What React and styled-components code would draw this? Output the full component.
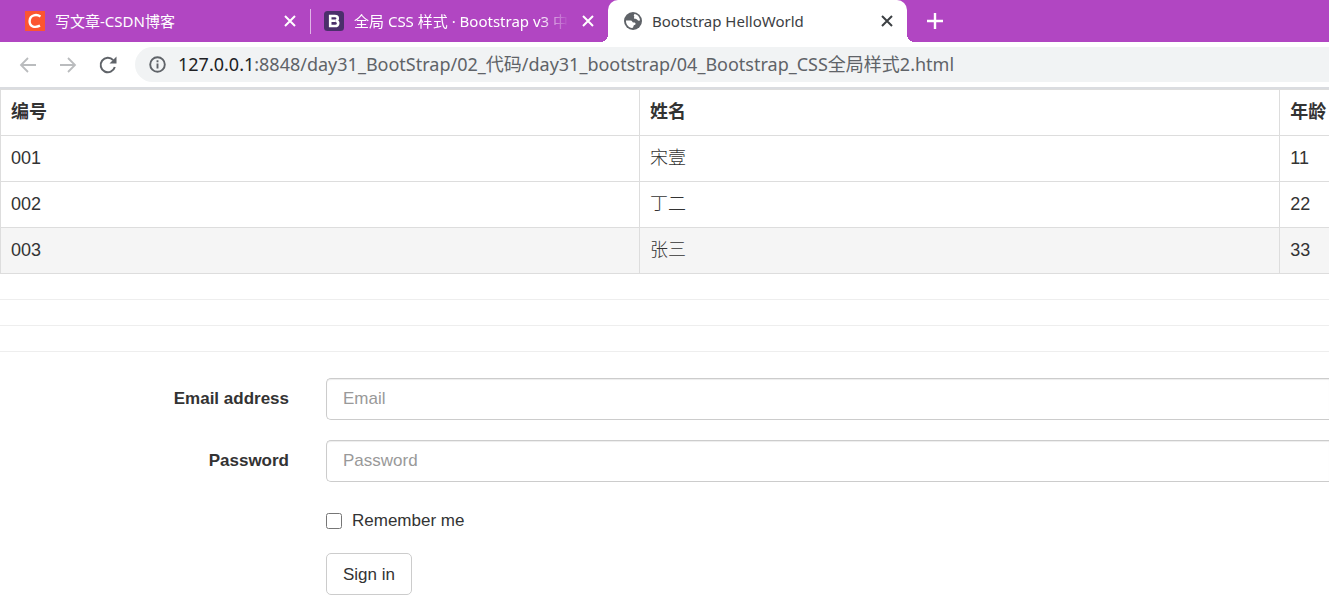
import React from 'react'
import styled, { createGlobalStyle } from 'styled-components'

const GlobalStyle = createGlobalStyle`
  * {
    box-sizing: border-box;
  }
  body {
    margin: 0;
    overflow: hidden;
    background: #fff;
    color: #333;
    font-family: "Liberation Sans", Arial, "Noto Sans CJK SC", sans-serif;
  }
`

const TabStrip = styled.div`
  display: flex;
  height: 42px;
  background: #b146c2;
  font-family: "Noto Sans", "Noto Sans CJK SC", sans-serif;
  font-size: 15px;
`

const Tab = styled.div`
  position: relative;
  display: flex;
  align-items: center;
  gap: 10px;
  flex: 0 1 ${props => props.$width}px;
  min-width: 0;
  padding: 0 11px 0 ${props => props.$start}px;
  color: ${props => (props.$active ? '#3c4043' : '#fff')};
  background: ${props => (props.$active ? '#fff' : 'transparent')};
  border-radius: 10px 10px 0 0;
  & > svg {
    flex: none;
  }
  ${props => props.$active && `
    &::before,
    &::after {
      content: '';
      position: absolute;
      bottom: 0;
      width: 8px;
      height: 8px;
    }
    &::before {
      right: 100%;
      background: radial-gradient(circle at 0 0, transparent 8px, #fff 8px);
    }
    &::after {
      left: 100%;
      background: radial-gradient(circle at 100% 0, transparent 8px, #fff 8px);
    }
  `}
`

const TabTitle = styled.span`
  flex: 1;
  line-height: 24px;
  white-space: nowrap;
  ${props => props.$faded && `
    mask-image: linear-gradient(to right, #000 calc(100% - 30px), transparent);
  `}
`

const Divider = styled.span`
  align-self: center;
  width: 1px;
  height: 25px;
  background: #e0b5e7;
`

const IconButton = styled.button`
  display: flex;
  align-items: center;
  justify-content: center;
  flex: none;
  width: ${props => props.$size}px;
  height: ${props => props.$size}px;
  padding: 0;
  border: 0;
  background: none;
  color: ${props => props.$color || 'inherit'};
`

const NewTab = styled(IconButton)`
  align-self: center;
  margin-left: 18px;
`

const Toolbar = styled.div`
  display: flex;
  align-items: center;
  gap: 20px;
  height: 45px;
  padding-left: 18px;
`

const AddressBar = styled.div`
  display: flex;
  align-items: center;
  gap: 12px;
  flex: 1;
  height: 35px;
  margin-left: -3px;
  padding-left: 14px;
  border-radius: 18px 0 0 18px;
  background: #f1f3f4;
  color: #5f6368;
`

const Url = styled.span`
  padding-bottom: 2px;
  font-family: "Noto Sans", "Noto Sans CJK SC", sans-serif;
  font-size: 18px;
  line-height: 26px;
  white-space: nowrap;
`

const Host = styled.span`
  color: #202124;
`

const Page = styled.main`
  border-top: 2px solid #dadce0;
`

const Table = styled.table`
  width: 100%;
  table-layout: fixed;
  border-collapse: collapse;
  font-size: 18px;
  line-height: 25px;
`

const Cell = styled.td`
  height: 46px;
  padding: 10px;
  border: 1px solid #ddd;
  font-weight: 300;
  text-align: left;
  white-space: nowrap;
  &:last-child {
    padding-right: 0;
    border-right: 0;
  }
`

const HeadCell = styled(Cell)`
  font-weight: 700;
`

const Row = styled.tr`
  background: ${props => (props.$active ? '#f5f5f5' : '#fff')};
`

const Column = styled.col`
  width: ${props => props.$width};
`

const Rule = styled.hr`
  margin: 25px 0;
  border: 0;
  border-top: 1px solid #eee;
`

const Form = styled.form`
  display: grid;
  grid-template-columns: 289px 1fr;
  column-gap: 37px;
  row-gap: 20px;
  margin-top: 26px;
  font-size: 17px;
  line-height: 25px;
`

const Label = styled.label`
  padding-top: 8px;
  font-weight: 700;
  text-align: right;
`

const Input = styled.input`
  width: 100%;
  height: 42px;
  padding: 7px 16px;
  border: 1px solid #ccc;
  border-right: 0;
  border-radius: 5px 0 0 5px;
  box-shadow: inset 0 1px 1px rgba(0, 0, 0, 0.075);
  color: #555;
  font: inherit;
  &::placeholder {
    color: #999;
  }
`

const Offset = styled.div`
  grid-column: 2;
`

const CheckLabel = styled.label`
  display: flex;
  align-items: center;
  gap: 10px;
  padding-top: 6px;
`

const Checkbox = styled.input`
  width: 16px;
  height: 16px;
  margin: 0;
`

const Submit = styled.button`
  height: 42px;
  padding: 0 16px;
  border: 1px solid #ccc;
  border-radius: 5px;
  background: #fff;
  color: #333;
  font: inherit;
`

const CloseIcon = () => (
  <svg width="12" height="12" viewBox="0 0 12 12" fill="none" stroke="currentColor" strokeWidth="2">
    <path d="M1 1l10 10M11 1L1 11" />
  </svg>
)

const CsdnIcon = () => (
  <svg width="20" height="20" viewBox="0 0 20 20">
    <path fill="#fc5531" d="M0 0h20v20H0z" />
    <path d="M15.5 5.4C12 3.2 5 3.2 4.6 10c-.2 6.4 6 6.8 10.4 4.6" fill="none" stroke="#fff" strokeWidth="2.4" />
  </svg>
)

const BootstrapIcon = () => (
  <svg width="20" height="20" viewBox="0 0 20 20">
    <rect width="20" height="20" rx="3.5" fill="#4b2f6b" />
    <path d="M6.2 5h4.600c3.900 0 3.700 4 .8 4.700 3.700.5 3.400 5.300-.6 5.300H6.200zM6.200 9.700h5" fill="none" stroke="#fff" strokeWidth="2.6" />
  </svg>
)

const GlobeIcon = () => (
  <svg width="18" height="18" viewBox="0 0 18 18">
    <circle cx="9" cy="9" r="9" fill="#5f6368" />
    <path d="M10.5 2c3 .5 5.300 3 5.500 6.200-1.300.9-2 .5-2.500-.3-.8-1.300-2.500-.4-3.300-1.400-.7-1 .7-1.700-.2-2.500-.5-.6.100-1.500.5-2zM2 8.500h4.500c2 0 1.500 2 3 2 1.800 0 2.300.5 2 1.700-.3 1-1.700.5-2 1.700-.2 1-.5 2-1.500 2.100C4.600 15.600 1.700 12.300 2 8.500z" fill="#fff" />
  </svg>
)

const ArrowIcon = ({ forward }) => (
  <svg width="20" height="20" viewBox="0 0 20 20" fill="none" stroke="currentColor" strokeWidth="1.8">
    <path d={forward ? 'M2 10h15M10 3l7 7-7 7' : 'M18 10H3M10 3l-7 7 7 7'} />
  </svg>
)

const ReloadIcon = () => (
  <svg width="20" height="20" viewBox="0 0 20 20">
    <path d="M16.8 12a7.2 7.2 0 1 1-1.6-6.8" fill="none" stroke="currentColor" strokeWidth="2" />
    <path d="M18.5 1.5v7h-7z" fill="currentColor" />
  </svg>
)

const InfoIcon = () => (
  <svg width="17" height="17" viewBox="0 0 17 17" fill="none" stroke="currentColor" strokeWidth="1.9">
    <circle cx="8.5" cy="8.5" r="7.3" />
    <path d="M8.5 7.6v4.9M8.5 4.3v1.9" />
  </svg>
)

const people = [
  { id: '001', name: '宋壹', age: 11 },
  { id: '002', name: '丁二', age: 22 },
  { id: '003', name: '张三', age: 33, active: true },
]

const App = () => (
  <>
    <GlobalStyle />
    <TabStrip>
      <Tab $width={310} $start={25}>
        <CsdnIcon />
        <TabTitle>写文章-CSDN博客</TabTitle>
        <IconButton $size={18} aria-label="Close tab"><CloseIcon /></IconButton>
      </Tab>
      <Divider />
      <Tab $width={297} $start={13}>
        <BootstrapIcon />
        <TabTitle $faded>全局 CSS 样式 · Bootstrap v3 中</TabTitle>
        <IconButton $size={18} aria-label="Close tab"><CloseIcon /></IconButton>
      </Tab>
      <Tab $width={299} $start={16} $active>
        <GlobeIcon />
        <TabTitle>Bootstrap HelloWorld</TabTitle>
        <IconButton $size={18} aria-label="Close tab"><CloseIcon /></IconButton>
      </Tab>
      <NewTab $size={20} $color="#fff" aria-label="New tab">
        <svg width="16" height="16" viewBox="0 0 16 16" stroke="currentColor" strokeWidth="2.4">
          <path d="M8 0v16M0 8h16" />
        </svg>
      </NewTab>
    </TabStrip>
    <Toolbar>
      <IconButton $size={20} $color="#babcbe" aria-label="Back"><ArrowIcon /></IconButton>
      <IconButton $size={20} $color="#babcbe" aria-label="Forward"><ArrowIcon forward /></IconButton>
      <IconButton $size={20} $color="#5f6368" aria-label="Reload"><ReloadIcon /></IconButton>
      <AddressBar>
        <InfoIcon />
        <Url>
          <Host>127.0.0.1</Host>
          :8848/day31_BootStrap/02_代码/day31_bootstrap/04_Bootstrap_CSS全局样式2.html
        </Url>
      </AddressBar>
    </Toolbar>
    <Page>
      <Table>
        <colgroup>
          <Column $width="48.1%" />
          <Column $width="48.2%" />
          <Column />
        </colgroup>
        <thead>
          <Row>
            <HeadCell as="th">编号</HeadCell>
            <HeadCell as="th">姓名</HeadCell>
            <HeadCell as="th">年龄</HeadCell>
          </Row>
        </thead>
        <tbody>
          {people.map(person => (
            <Row key={person.id} $active={person.active}>
              <Cell>{person.id}</Cell>
              <Cell>{person.name}</Cell>
              <Cell>{person.age}</Cell>
            </Row>
          ))}
        </tbody>
      </Table>
      <Rule />
      <Rule />
      <Rule />
      <Form>
        <Label htmlFor="email">Email address</Label>
        <Input id="email" type="email" placeholder="Email" />
        <Label htmlFor="password">Password</Label>
        <Input id="password" type="password" placeholder="Password" />
        <Offset>
          <CheckLabel>
            <Checkbox type="checkbox" />
            Remember me
          </CheckLabel>
        </Offset>
        <Offset>
          <Submit type="submit">Sign in</Submit>
        </Offset>
      </Form>
    </Page>
  </>
)

export default App
